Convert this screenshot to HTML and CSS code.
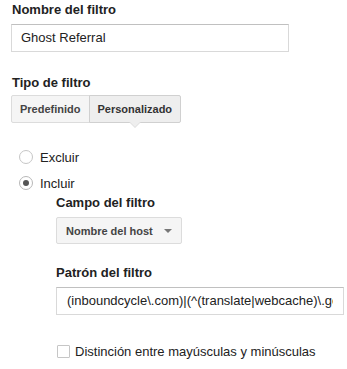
FILE: index.html
```html
<!DOCTYPE html>
<html lang="es">
<head>
<meta charset="utf-8">
<link rel="stylesheet" href="styles.css">
</head>
<body>
<div class="form">
  <div class="label">Nombre del filtro</div>
  <div class="field name-field">Ghost Referral</div>

  <div class="label type-label">Tipo de filtro</div>
  <div class="tabs">
    <div class="tab">Predefinido</div>
    <div class="tab selected">Personalizado</div>
  </div>

  <div class="radios">
    <div class="radio-row">
      <span class="radio"></span>
      <span class="radio-text">Excluir</span>
    </div>
    <div class="radio-row second">
      <span class="radio checked"></span>
      <span class="radio-text">Incluir</span>
    </div>
  </div>

  <div class="nested">
    <div class="label field-label">Campo del filtro</div>
    <div class="select">
      <span class="select-text">Nombre del host</span>
      <span class="select-arrow"></span>
    </div>

    <div class="label pattern-label">Patrón del filtro</div>
    <div class="field pattern-field"><span class="pattern-text">(inboundcycle\.com)|(^(translate|webcache)\.googleusercontent\.com)</span></div>

    <div class="check-row">
      <span class="checkbox"></span>
      <span class="check-text">Distinción entre mayúsculas y minúsculas</span>
    </div>
  </div>
</div>
</body>
</html>
```

FILE: styles.css
```css
html, body {
  margin: 0;
  padding: 0;
  background: #ffffff;
}

body {
  font-family: "Liberation Sans", Arial, sans-serif;
  font-size: 13px;
  color: #222222;
  width: 347px;
  height: 369px;
  overflow: hidden;
}

.form {
  padding: 2px 0 0 11px;
}

.label {
  font-weight: bold;
  font-size: 13px;
  line-height: 16px;
  color: #222222;
  margin-left: 1px;
}

.field {
  box-sizing: border-box;
  height: 28px;
  border: 1px solid #d9d9d9;
  border-top-color: #c0c0c0;
  background: #ffffff;
  padding-left: 9px;
  line-height: 26px;
  font-size: 13px;
  color: #222222;
  white-space: nowrap;
  overflow: hidden;
}

.name-field {
  width: 278px;
  margin-top: 6px;
}

.type-label {
  margin-top: 23px;
}

.tabs {
  display: flex;
  margin-top: 4px;
}

.tab {
  position: relative;
  box-sizing: border-box;
  height: 28px;
  line-height: 26px;
  padding: 0 8px;
  border: 1px solid #dcdcdc;
  background: #f5f5f5;
  font-size: 11px;
  font-weight: bold;
  color: #444444;
  border-radius: 2px 0 0 2px;
}

.tab + .tab {
  border-left: 1px solid #dcdcdc;
  margin-left: -1px;
  border-radius: 0 2px 2px 0;
}

.tab.selected {
  background: #eeeeee;
  border-color: #d0d0d0;
  color: #333333;
}

.tab.selected::after {
  content: "";
  position: absolute;
  left: 50%;
  bottom: -6px;
  margin-left: -6px;
  width: 0;
  height: 0;
  border-left: 6px solid transparent;
  border-right: 6px solid transparent;
  border-top: 6px solid #dcdcdc;
}

.tab.selected::before {
  content: "";
  position: absolute;
  left: 50%;
  bottom: -5px;
  margin-left: -5px;
  width: 0;
  height: 0;
  border-left: 5px solid transparent;
  border-right: 5px solid transparent;
  border-top: 5px solid #eeeeee;
  z-index: 1;
}

.radios {
  margin-top: 24px;
}

.radio-row {
  display: flex;
  align-items: center;
  height: 20px;
  padding-left: 8px;
}

.radio-row.second {
  margin-top: 6px;
}

.radio {
  box-sizing: border-box;
  width: 14px;
  height: 14px;
  border: 1px solid #c6c6c6;
  border-radius: 50%;
  background: #ffffff;
  display: flex;
  align-items: center;
  justify-content: center;
  flex: none;
}

.radio.checked {
  border-color: #b8b8b8;
}

.radio.checked::after {
  content: "";
  width: 6px;
  height: 6px;
  border-radius: 50%;
  background: #555555;
}

.radio-text {
  margin-left: 7px;
  font-size: 13px;
  color: #222222;
}

.nested {
  margin-left: 45px;
}

.field-label {
  margin-top: 2px;
  margin-left: 0;
}

.select {
  box-sizing: border-box;
  width: 126px;
  height: 27px;
  margin-top: 6px;
  border: 1px solid #dcdcdc;
  border-radius: 2px;
  background: #f5f5f5;
  display: flex;
  align-items: center;
  padding: 0 9px 0 9px;
}

.select-text {
  font-size: 11px;
  font-weight: bold;
  color: #444444;
  flex: 1;
}

.select-arrow {
  width: 0;
  height: 0;
  border-left: 4px solid transparent;
  border-right: 4px solid transparent;
  border-top: 4px solid #777777;
  margin-top: 1px;
}

.pattern-label {
  margin-top: 21px;
  margin-left: 0;
}

.pattern-field {
  width: 288px;
  margin-top: 6px;
  padding: 0 10px 0 10px;
}

.pattern-text {
  display: block;
  overflow: hidden;
  white-space: nowrap;
}

.check-row {
  display: flex;
  align-items: center;
  height: 16px;
  margin-top: 28px;
  padding-left: 1px;
}

.checkbox {
  box-sizing: border-box;
  width: 13px;
  height: 13px;
  border: 1px solid #c6c6c6;
  border-radius: 1px;
  background: #ffffff;
  flex: none;
}

.check-text {
  margin-left: 5px;
  font-size: 13px;
  color: #222222;
}
```
